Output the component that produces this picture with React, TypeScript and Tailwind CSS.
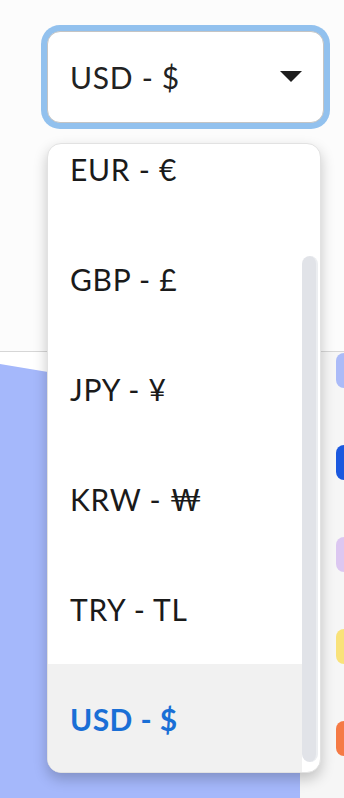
import React from "react";

const items = ["EUR - €", "GBP - £", "JPY - ¥", "KRW - ₩", "TRY - TL", "USD - $"];

export default function App() {
  return (
    <div
      className="relative w-[344px] h-[798px] overflow-hidden bg-white"
      style={{ fontFamily: "Lato, 'Noto Sans', sans-serif" }}
    >
      <div className="flex flex-col h-full">
        <div className="h-[352px] shrink-0 bg-[#fcfcfc] border-b border-[#d6d6d6] pt-[31px] pl-[47px]">
          <div className="w-[277px] h-[92px] rounded-[13px] border border-[#c4c4c4] ring-[6px] ring-[#92c1ee] bg-white flex items-center justify-between pl-[22px] pr-[21px]">
            <span className="text-[30px] leading-none font-normal text-[#222222] tracking-[0.7px]">USD - $</span>
            <svg width="22" height="12" viewBox="0 0 22 12">
              <path d="M0 0 L22 0 L11 11 Z" fill="#1e1e1e" />
            </svg>
          </div>
        </div>
        <div className="flex flex-1">
          <div className="w-[300px] shrink-0">
            <svg width="300" height="446" viewBox="0 0 300 446" className="block">
              <path d="M0 12 L48 20 Q170 40 300 70 L300 446 L0 446 Z" fill="#a5b8fb" />
            </svg>
          </div>
          <div className="flex-1 bg-[#f6f6f6] pl-[36px] pt-[1px] flex flex-col gap-[57px]">
            <div className="h-[35px] rounded-[8px] bg-[#abbbf8] w-[40px]" />
            <div className="h-[35px] rounded-[8px] bg-[#1b58df] w-[40px]" />
            <div className="h-[35px] rounded-[8px] bg-[#dcc7f1] w-[40px]" />
            <div className="h-[35px] rounded-[8px] bg-[#f9e27a] w-[40px]" />
            <div className="h-[35px] rounded-[8px] bg-[#f57a45] w-[40px]" />
          </div>
        </div>
      </div>

      <div className="absolute left-[47px] top-[143px] w-[274px] h-[630px] rounded-[14px] bg-white border border-[#e2e2e2] shadow-[0_6px_14px_rgba(0,0,0,0.22)] overflow-hidden flex">
        <div className="w-[254px] shrink-0 overflow-hidden">
          <div className="-mt-[30px] flex flex-col">
            {items.map((t, i) => {
              const sel = i === items.length - 1;
              return (
                <div
                  key={t}
                  className={
                    "h-[110px] flex items-center pl-[22px] text-[30px] leading-none " +
                    (sel ? "bg-[#f1f1f1] text-[#1a6fd6] font-bold tracking-[0.4px]" : "text-[#1a1a1a] font-normal tracking-[0.7px]")
                  }
                >
                  {t}
                </div>
              );
            })}
          </div>
        </div>
        <div className="flex-1 relative">
          <div className="absolute left-0 right-[2px] top-[112px] bottom-[10px] rounded-full bg-[#e1e3e8] border-r-[2px] border-[#eceef1]" />
        </div>
      </div>
    </div>
  );
}
